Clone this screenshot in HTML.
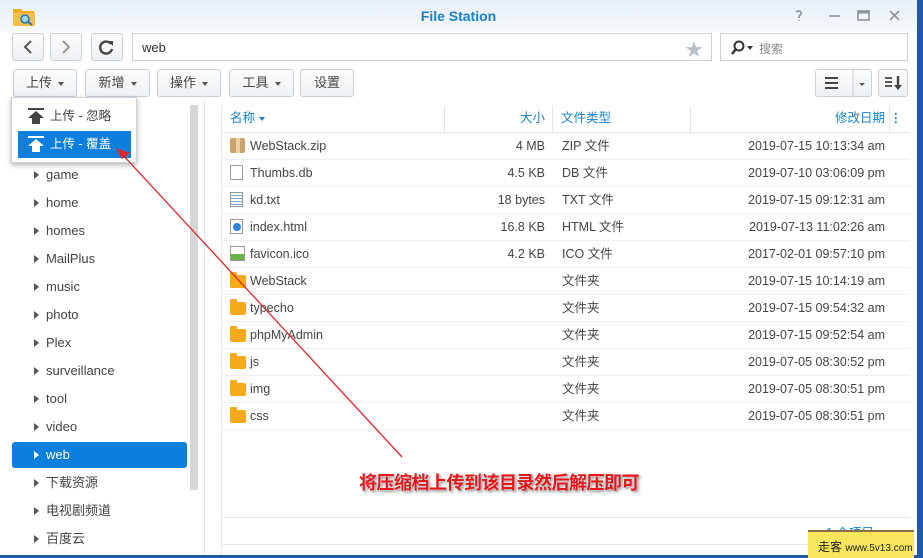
<!DOCTYPE html>
<html><head><meta charset="utf-8"><style>
*{box-sizing:border-box;margin:0;padding:0}
body{width:923px;height:558px;overflow:hidden;background:#1e5aa8;font-family:"Liberation Sans","Noto Sans CJK SC",sans-serif;font-size:13px;color:#333;position:relative}
.win{position:absolute;left:0;top:0;width:917px;height:555px;background:#fff;overflow:hidden}
.title{position:absolute;left:0;top:0;width:100%;height:32px;background:linear-gradient(#e6eef7,#f7f9fc)}
.title .t{position:absolute;left:0;right:0;top:8px;text-align:center;color:#1a80c7;font-weight:bold;font-size:14px}
.btn{position:absolute;border:1px solid #c9d0d8;border-radius:3px;background:linear-gradient(#fbfcfd,#eef1f4);color:#444;text-align:center;font-size:13px}
.caret{display:inline-block;width:0;height:0;border-left:3.5px solid transparent;border-right:3.5px solid transparent;border-top:4px solid #555;vertical-align:middle;margin-left:6px}
.input{position:absolute;border:1px solid #c9d0d8;background:#fff}
.side{position:absolute;left:0;top:100px;width:205px;height:455px;background:#fff;border-right:1px solid #e3e6ea}
.si{position:absolute;left:12px;width:175px;height:26px;line-height:26px;padding-left:34px;color:#444;font-size:13px}
.si:before{content:"";position:absolute;left:22px;top:9px;border-top:4px solid transparent;border-bottom:4px solid transparent;border-left:5px solid #555}
.si.sel{background:#0a7fdd;color:#fff;border-radius:3px}
.si.sel:before{border-left-color:#fff}
.scroll{position:absolute;left:190px;top:105px;width:8px;height:385px;background:#d6d6d6}
.hdr{position:absolute;left:221px;top:106px;width:689px;height:27px;border-bottom:1px solid #e3e6ea;color:#1a80c7;font-size:12.5px}
.hdr span{position:absolute;top:5px;line-height:15px}
.row{position:absolute;left:221px;width:689px;height:27px;border-bottom:1px solid #eceef0;font-size:12.5px;color:#444}
.row span{position:absolute;top:5px;line-height:16px;height:16px}
.ic{position:absolute;left:9px;top:5px;width:15px;height:15px}
.fold{background:#f7a81b;border-radius:2px;top:7px;height:13px;width:16px}
.fold:before{content:"";position:absolute;left:0;top:-3px;width:7px;height:4px;background:#f7a81b;border-radius:1px 1px 0 0}
.menu{position:absolute;left:11px;top:97px;width:126px;height:66px;background:#fff;border:1px solid #cfd4da;box-shadow:0 2px 5px rgba(0,0,0,.3)}
.mi{position:absolute;left:6px;width:113px;height:27px;line-height:27px;padding-left:32px;font-size:12.5px;color:#444}
</style></head><body>
<div class="win">
<div class="title"><div class="t">File Station</div>
<svg style="position:absolute;left:12px;top:5px" width="24" height="22"><path d="M1 4h8l2 2h11v14H1z" fill="#f3a922"/><rect x="1" y="8" width="22" height="13" fill="#f8c04a"/><circle cx="13" cy="14" r="4" fill="#9fd4f2" stroke="#1e77b8" stroke-width="1.5"/><path d="M16 17l4 3" stroke="#1e77b8" stroke-width="2"/></svg>
<svg style="position:absolute;left:793px;top:9px" width="120" height="14" fill="none" stroke="#8a949e" stroke-width="1.6"><path d="M3 3q3-2 5 0q1 2-2 4v2M6 11v1"/><path d="M36 7h11"/><rect x="65" y="2" width="11" height="9"/><path d="M65 3h11" stroke-width="3"/><path d="M97 2l9 9M106 2l-9 9"/></svg>
</div>
<div class="btn" style="left:12px;top:33px;width:32px;height:28px"><svg width="30" height="26"><path d="M18 7l-6 6 6 6" fill="none" stroke="#555" stroke-width="2"/></svg></div>
<div class="btn" style="left:50px;top:33px;width:32px;height:28px"><svg width="30" height="26"><path d="M12 7l6 6-6 6" fill="none" stroke="#999" stroke-width="2"/></svg></div>
<div class="btn" style="left:91px;top:33px;width:32px;height:28px"><svg width="30" height="26"><path d="M19 10a6 6 0 1 0 1 5" fill="none" stroke="#444" stroke-width="2.4"/><path d="M16 7h5v5z" fill="#444"/></svg></div>
<div class="input" style="left:132px;top:33px;width:580px;height:28px"><span style="position:absolute;left:9px;top:6px;font-size:13px">web</span><span style="position:absolute;right:8px;top:2px;color:#b9c0c8;font-size:18px">★</span></div>
<div class="input" style="left:720px;top:33px;width:188px;height:28px"><svg style="position:absolute;left:9px;top:6px" width="26" height="16"><circle cx="9" cy="6" r="4.5" fill="none" stroke="#333" stroke-width="2"/><path d="M6 9l-4 5" stroke="#333" stroke-width="2.5"/><path d="M17 6h6l-3 4z" fill="#333"/></svg><span style="position:absolute;left:38px;top:6px;color:#888;font-size:12px">搜索</span></div>
<div class="btn" style="left:13px;top:69px;width:64px;height:28px;line-height:26px">上传<span class="caret"></span></div>
<div class="btn" style="left:85px;top:69px;width:65px;height:28px;line-height:26px">新增<span class="caret"></span></div>
<div class="btn" style="left:157px;top:69px;width:64px;height:28px;line-height:26px">操作<span class="caret"></span></div>
<div class="btn" style="left:229px;top:69px;width:65px;height:28px;line-height:26px">工具<span class="caret"></span></div>
<div class="btn" style="left:300px;top:69px;width:54px;height:28px;line-height:26px">设置</div>
<div class="btn" style="left:815px;top:69px;width:57px;height:28px"><svg style="position:absolute;left:0;top:0" width="57" height="28"><path d="M9 8h13M9 13h13M9 18h13" stroke="#444" stroke-width="2"/><path d="M37 0v28" stroke="#c9d0d8"/><path d="M43 13h6l-3 3z" fill="#555"/></svg></div>
<div class="btn" style="left:878px;top:69px;width:30px;height:28px"><svg width="28" height="26"><path d="M6 8h7M6 12h7M6 16h7" stroke="#444" stroke-width="1.8"/><path d="M19 6v11" stroke="#444" stroke-width="2.4"/><path d="M15 15h8l-4 5z" fill="#444"/></svg></div>

<div class="side"></div>
<div class="scroll"></div>
<div class="si" style="top:162px">game</div>
<div class="si" style="top:190px">home</div>
<div class="si" style="top:218px">homes</div>
<div class="si" style="top:246px">MailPlus</div>
<div class="si" style="top:274px">music</div>
<div class="si" style="top:302px">photo</div>
<div class="si" style="top:330px">Plex</div>
<div class="si" style="top:358px">surveillance</div>
<div class="si" style="top:386px">tool</div>
<div class="si" style="top:414px">video</div>
<div class="si sel" style="top:442px">web</div>
<div class="si" style="top:470px">下载资源</div>
<div class="si" style="top:498px">电视剧频道</div>
<div class="si" style="top:526px">百度云</div>

<div style="position:absolute;left:221px;top:105px;width:1px;height:450px;background:#e3e6ea"></div>
<div class="hdr"><span style="left:9px">名称<span class="caret" style="position:static;margin-left:4px;border-top-color:#1a80c7"></span></span><span style="right:365px">大小</span><span style="left:340px">文件类型</span><span style="right:25px">修改日期</span><span style="right:8px;font-weight:bold">⋮</span>
<div style="position:absolute;left:223px;top:0;width:1px;height:26px;background:#e3e6ea"></div><div style="position:absolute;left:331px;top:0;width:1px;height:26px;background:#e3e6ea"></div><div style="position:absolute;left:469px;top:0;width:1px;height:26px;background:#e3e6ea"></div><div style="position:absolute;left:668px;top:0;width:1px;height:26px;background:#e3e6ea"></div></div>

<div class="row" style="top:133px"><div class="ic" style="background:#c9a36b;border-radius:2px"><div style="margin:0 auto;width:4px;height:15px;background:#e8d2a8"></div></div><span style="left:29px">WebStack.zip</span><span style="right:365px">4 MB</span><span style="left:341px">ZIP 文件</span><span style="right:25px">2019-07-15 10:13:34 am</span></div>
<div class="row" style="top:160px"><div class="ic" style="border:1px solid #999;width:13px;border-radius:1px"></div><span style="left:29px">Thumbs.db</span><span style="right:365px">4.5 KB</span><span style="left:341px">DB 文件</span><span style="right:25px">2019-07-10 03:06:09 pm</span></div>
<div class="row" style="top:187px"><div class="ic" style="border:1px solid #999;width:13px;background:repeating-linear-gradient(#fff 0 2px,#7aa6d6 2px 3px)"></div><span style="left:29px">kd.txt</span><span style="right:365px">18 bytes</span><span style="left:341px">TXT 文件</span><span style="right:25px">2019-07-15 09:12:31 am</span></div>
<div class="row" style="top:214px"><div class="ic" style="border:1px solid #999;width:13px"><div style="margin:3px 2px;width:8px;height:8px;border-radius:50%;background:#2f86d8"></div></div><span style="left:29px">index.html</span><span style="right:365px">16.8 KB</span><span style="left:341px">HTML 文件</span><span style="right:25px">2019-07-13 11:02:26 am</span></div>
<div class="row" style="top:241px"><div class="ic" style="border:1px solid #999;background:linear-gradient(#fff 55%,#6cb04a 55%)"></div><span style="left:29px">favicon.ico</span><span style="right:365px">4.2 KB</span><span style="left:341px">ICO 文件</span><span style="right:25px">2017-02-01 09:57:10 pm</span></div>
<div class="row" style="top:268px"><div class="ic fold"></div><span style="left:29px">WebStack</span><span style="left:341px">文件夹</span><span style="right:25px">2019-07-15 10:14:19 am</span></div>
<div class="row" style="top:295px"><div class="ic fold"></div><span style="left:29px">typecho</span><span style="left:341px">文件夹</span><span style="right:25px">2019-07-15 09:54:32 am</span></div>
<div class="row" style="top:322px"><div class="ic fold"></div><span style="left:29px">phpMyAdmin</span><span style="left:341px">文件夹</span><span style="right:25px">2019-07-15 09:52:54 am</span></div>
<div class="row" style="top:349px"><div class="ic fold"></div><span style="left:29px">js</span><span style="left:341px">文件夹</span><span style="right:25px">2019-07-05 08:30:52 pm</span></div>
<div class="row" style="top:376px"><div class="ic fold"></div><span style="left:29px">img</span><span style="left:341px">文件夹</span><span style="right:25px">2019-07-05 08:30:51 pm</span></div>
<div class="row" style="top:403px"><div class="ic fold"></div><span style="left:29px">css</span><span style="left:341px">文件夹</span><span style="right:25px">2019-07-05 08:30:51 pm</span></div>
<div style="position:absolute;left:221px;top:517px;width:689px;height:1px;background:#e3e6ea"></div>
<div style="position:absolute;left:221px;top:544px;width:689px;height:1px;background:#e3e6ea"></div>
<div style="position:absolute;left:826px;top:522px;color:#1a80c7;font-size:12.5px">1 个项目</div>

<div class="menu">
<div class="mi" style="top:5px"><svg style="position:absolute;left:9px;top:5px" width="18" height="18"><path d="M1 1h16" stroke="#444" stroke-width="2"/><path d="M9 3l8 7h-4v6H5v-6H1z" fill="#444"/></svg>上传 - 忽略</div>
<div class="mi" style="top:33px;background:#0a7fdd;color:#fff"><svg style="position:absolute;left:9px;top:5px" width="18" height="18"><path d="M1 1h16" stroke="#fff" stroke-width="2"/><path d="M9 3l8 7h-4v6H5v-6H1z" fill="#fff"/></svg>上传 - 覆盖</div>
</div>
</div>

<svg style="position:absolute;left:0;top:0" width="923" height="558"><path d="M402 457L122 154" stroke="#e0262a" stroke-width="1.3"/><path d="M116 148l14 5-8 6z" fill="#e0262a"/></svg>
<div style="position:absolute;left:359px;top:469px;color:#e8161b;font-size:18px;font-weight:bold;letter-spacing:-0.5px;text-shadow:0 0 2px #fff,1px 1px 2px #888,2px 2px 3px #aaa">将压缩档上传到该目录然后解压即可</div>

<div style="position:absolute;left:808px;top:530px;width:106px;height:28px;background:#f8e75a;border-top:2px solid #8a6b4a;font-size:12px;color:#222;padding:6px 0 0 10px">走客 <span style="font-size:10px">www.5v13.com</span></div>
</body></html>
